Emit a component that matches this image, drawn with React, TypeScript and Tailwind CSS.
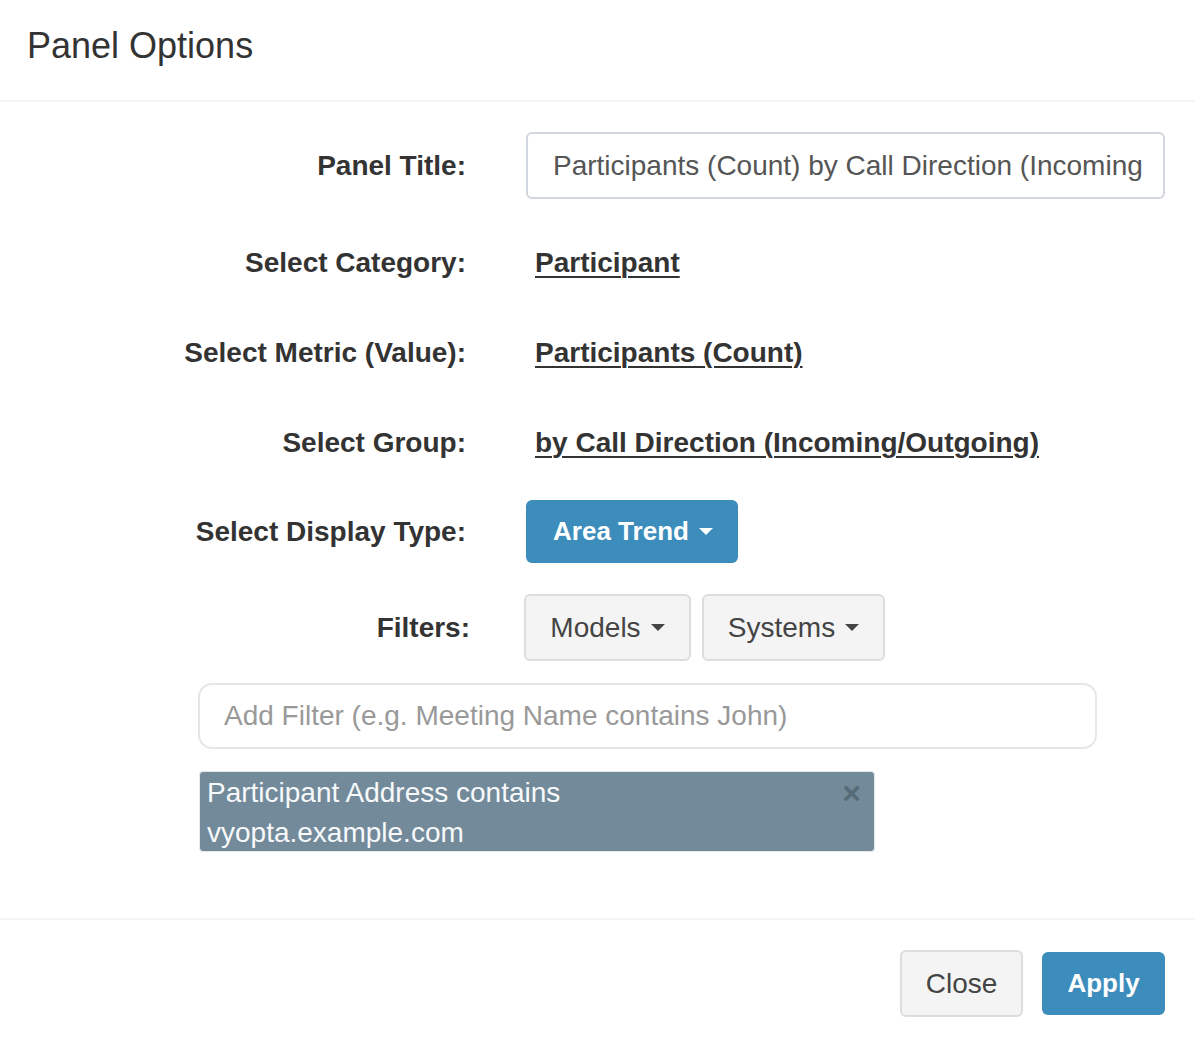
import { ReactNode } from "react";

const font = "font-['Liberation_Sans','Helvetica_Neue',Arial,sans-serif]";

const Caret = ({ color }: { color: string }) => (
  <span
    className={`ml-[10px] inline-block h-0 w-0 border-x-[7px] border-t-[7px] border-x-transparent ${color}`}
  />
);

const Row = ({
  label,
  children,
  className,
  labelWidth = "w-[466px]",
  valueGap = "ml-[60px]",
}: {
  label: string;
  children: ReactNode;
  className: string;
  labelWidth?: string;
  valueGap?: string;
}) => (
  <div className={`flex items-center ${className}`}>
    <div className={`${labelWidth} shrink-0 text-right text-[28px] font-bold text-[#333]`}>{label}</div>
    <div className={`${valueGap} flex flex-1 items-center`}>{children}</div>
  </div>
);

const LinkValue = ({ text }: { text: string }) => (
  <a href="#" className="pl-[9px] text-[28px] font-bold text-[#333] underline decoration-2 underline-offset-[4px]">
    {text}
  </a>
);

const GrayButton = ({ text, className }: { text: string; className: string }) => (
  <button
    className={`flex h-[67px] items-center justify-center rounded-[6px] border-2 border-[#ddd] bg-[#f4f4f4] text-[28px] text-[#444] ${className}`}
  >
    {text}
    <Caret color="border-t-[#444]" />
  </button>
);

export default function App() {
  return (
    <div className={`h-[1045px] w-[1195px] bg-white ${font}`}>
      <div className="flex h-[102px] items-center border-b-2 border-[#f4f4f4] px-[27px] pb-[8px]">
        <h4 className="text-[36px] text-[#333]">Panel Options</h4>
      </div>

      <div className="h-[816px] pt-[30px]">
        <Row label="Panel Title:" className="h-[67px]">
          <div className="flex h-[67px] w-[639px] items-center overflow-hidden whitespace-nowrap rounded-[6px] border-2 border-[#d2d6de] px-[25px] text-[28px] text-[#555]">
            Participants (Count) by Call Direction (Incoming
          </div>
        </Row>

        <Row label="Select Category:" className="mt-[30px] h-[67px]">
          <LinkValue text="Participant" />
        </Row>

        <Row label="Select Metric (Value):" className="mt-[23px] h-[67px]">
          <LinkValue text="Participants (Count)" />
        </Row>

        <Row label="Select Group:" className="mt-[23px] h-[67px]">
          <LinkValue text="by Call Direction (Incoming/Outgoing)" />
        </Row>

        <Row label="Select Display Type:" className="mt-[24px] h-[63px]">
          <button className="flex h-[63px] w-[212px] items-center justify-center rounded-[6px] bg-[#3c8dbc] pl-[2px] text-[26px] font-bold text-white">
            Area Trend
            <Caret color="border-t-white" />
          </button>
        </Row>

        <Row label="Filters:" className="mt-[31px] h-[67px]" labelWidth="w-[470px]" valueGap="ml-[54px]">
          <div className="flex gap-[11px]">
            <GrayButton text="Models" className="w-[167px]" />
            <GrayButton text="Systems" className="w-[183px]" />
          </div>
        </Row>

        <div className="ml-[198px] mt-[22px] flex h-[66px] w-[899px] items-center rounded-[14px] border-2 border-[#e6e6e6] px-[24px] text-[28px] text-[#999]">
          Add Filter (e.g. Meeting Name contains John)
        </div>

        <div className="relative ml-[199px] mt-[22px] h-[81px] w-[676px] rounded-[4px] border border-[#e3e8eb] bg-[#728a9a] px-[7px] pt-[1px] text-[28px] leading-[40px] text-[#f7f9fa]">
          <div>Participant Address contains</div>
          <div>vyopta.example.com</div>
          <span className="absolute right-[13px] top-[1px] text-[32px] font-bold leading-[40px] text-[#566a77]">
            ×
          </span>
        </div>
      </div>

      <div className="flex items-center justify-end gap-[19px] border-t-2 border-[#f4f4f4] pr-[30px] pt-[30px]">
        <button className="h-[67px] w-[123px] rounded-[6px] border-2 border-[#ddd] bg-[#f4f4f4] text-[28px] text-[#444]">
          Close
        </button>
        <button className="h-[63px] w-[123px] rounded-[6px] bg-[#3c8dbc] text-[26px] font-bold text-white">
          Apply
        </button>
      </div>
    </div>
  );
}
